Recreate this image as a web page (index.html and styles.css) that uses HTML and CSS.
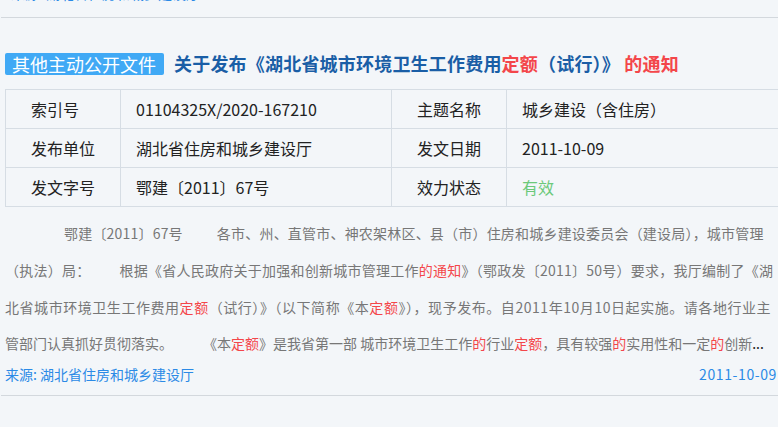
FILE: index.html
```html
<!DOCTYPE html>
<html lang="zh-CN">
<head>
<meta charset="utf-8">
<link rel="stylesheet" href="styles.css">
</head>
<body>
<div class="page">
  <div class="item prev">
    <div class="source"><span class="src-name">来源: 湖北省住房和城乡建设厅</span></div>
  </div>
  <div class="item">
    <div class="title-row">
      <span class="badge">其他主动公开文件</span>
      <h2 class="title">关于发布《湖北省城市环境卫生工作费用<em class="hl">定额</em>（试行）》 <em class="hl">的通知</em></h2>
    </div>
    <table class="meta">
      <colgroup><col class="c1"><col class="c2"><col class="c3"><col class="c4"></colgroup>
      <tr><td class="lbl">索引号</td><td class="val">01104325X/2020-167210</td><td class="lbl">主题名称</td><td class="val">城乡建设（含住房）</td></tr>
      <tr><td class="lbl">发布单位</td><td class="val">湖北省住房和城乡建设厅</td><td class="lbl">发文日期</td><td class="val">2011-10-09</td></tr>
      <tr><td class="lbl">发文字号</td><td class="val">鄂建〔2011〕67号</td><td class="lbl">效力状态</td><td class="val valid">有效</td></tr>
    </table>
    <p class="summary"><span class="ln l1"><span class="gap g1"></span>鄂建〔2011〕67号<span class="gap g2"></span>各市、州、直管市、神农架林区、县（市）住房和城乡建设委员会（建设局），城市管理</span><span class="ln l2">（执法）局：<span class="gap g3"></span>根据《省人民政府关于加强和创新城市管理工作<em class="hl">的通知</em>》（鄂政发〔2011〕50号）要求，我厅编制了《湖</span><span class="ln l3">北省城市环境卫生工作费用<em class="hl">定额</em>（试行）》（以下简称《本<em class="hl">定额</em>》），现予发布。自2011年10月10日起实施。请各地行业主</span><span class="ln l4">管部门认真抓好贯彻落实。<span class="gap g4"></span>《本<em class="hl">定额</em>》是我省第一部 城市环境卫生工作<em class="hl">的</em>行业<em class="hl">定额</em>，具有较强<em class="hl">的</em>实用性和一定<em class="hl">的</em>创新<span class="more">...</span></span></p>
    <div class="source"><span class="src-name">来源: 湖北省住房和城乡建设厅</span><span class="src-date">2011-10-09</span></div>
  </div>
</div>
</body>
</html>
```
FILE: styles.css
```css
html, body {
  margin: 0;
  padding: 0;
}
body {
  background: #f3f6f9;
  font-family: "Noto Sans CJK SC", "Microsoft YaHei", sans-serif;
  width: 778px;
  height: 427px;
  overflow: hidden;
}
.page {
  display: flow-root;
  padding-left: 1px;
}
.item {
  border-bottom: 1px solid #d3d8dd;
  padding: 34px 0 10px 4px;
}
.item.prev {
  padding: 0 0 11px 0;
  margin-top: -18px;
}
.prev .source {
  margin-top: 0;
  padding-left: 10px;
  padding-bottom: 2px;
}
.title-row {
  display: flex;
  align-items: center;
  height: 23px;
}
.badge {
  background: #40a9f5;
  color: #fff;
  font-size: 18px;
  line-height: 22px;
  padding: 0 8px 0 7px;
  border-radius: 2px;
  white-space: nowrap;
}
.title {
  margin: 0 0 0 10px;
  font-size: 18px;
  font-weight: bold;
  color: #1a5ea6;
  white-space: pre;
  line-height: 23px;
  letter-spacing: 0.2px;
}
.hl {
  font-style: normal;
  color: #f3464a;
}
.meta {
  margin-top: 14px;
  border-collapse: collapse;
  width: 776px;
  font-size: 16px;
  color: #222;
}
.meta td {
  border: 1px solid #d6dde4;
  height: 38px;
  padding: 0;
  white-space: nowrap;
}
.c1 { width: 115px; }
.c2 { width: 271px; }
.c3 { width: 115px; }
.lbl { padding-left: 25px !important; }
.val { padding-left: 15px !important; }
.valid { color: #6cc97a; }
.summary {
  margin: 8px 0 0 0;
  font-size: 14px;
  line-height: 37px;
  color: #777;
  white-space: nowrap;
}
.ln {
  display: block;
}
.l1 { letter-spacing: 0.2px; }
.l2 { letter-spacing: 0.25px; }
.l3 { letter-spacing: 0.55px; }
.l4 { letter-spacing: 0; line-height: 35px; }
.gap {
  display: inline-block;
}
.g1 { width: 59px; }
.g2 { width: 34px; }
.g3 { width: 29px; }
.g4 { width: 30px; }
.more {
  color: #222;
}
.source {
  display: flex;
  justify-content: space-between;
  font-size: 14px;
  line-height: 22px;
  color: #2b8ae6;
  margin-top: 0;
  padding-right: 1px;
}
.src-date {
  letter-spacing: 0.6px;
}
.item:not(.prev) .source {
  margin-top: 2px;
}
```
